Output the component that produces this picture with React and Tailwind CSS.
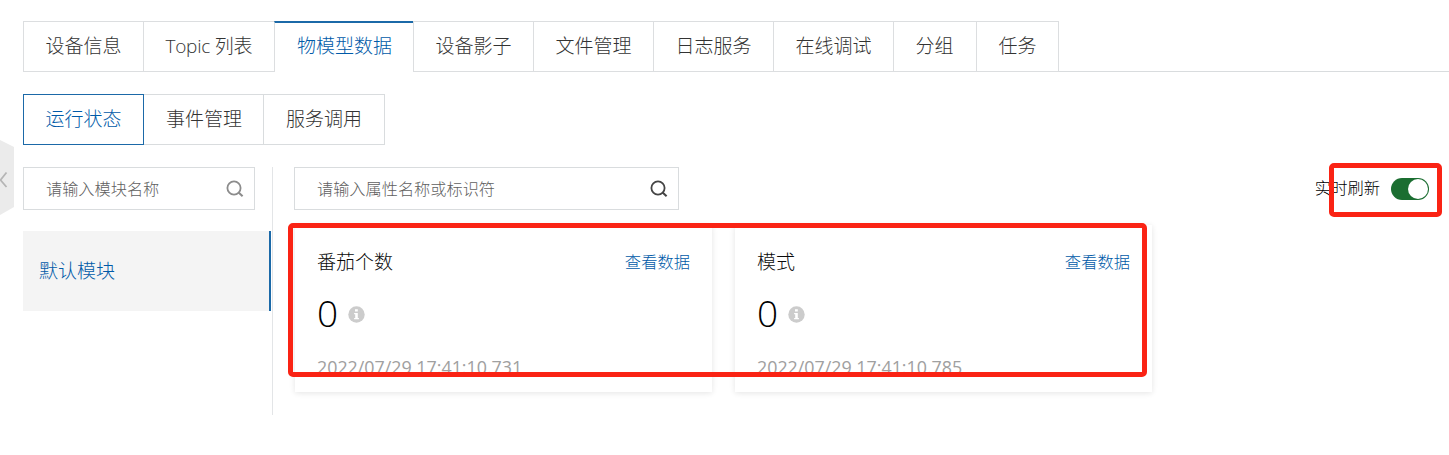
import React from "react";

const tabs = [
  { label: "设备信息", width: "w-[120px]" },
  { label: "Topic 列表", width: "w-[131px] tracking-[-0.25px]" },
  { label: "物模型数据", width: "w-[139px]", active: true },
  { label: "设备影子", width: "w-[120px]" },
  { label: "文件管理", width: "w-[120px]" },
  { label: "日志服务", width: "w-[120px]" },
  { label: "在线调试", width: "w-[120px]" },
  { label: "分组", width: "w-[83px]" },
  { label: "任务", width: "w-[83px] border-r" },
];

const cards = [
  { title: "番茄个数", value: "0", time: "2022/07/29 17:41:10.731" },
  { title: "模式", value: "0", time: "2022/07/29 17:41:10.785" },
];

function SearchIcon({ className }) {
  return (
    <svg className={className} width="18" height="18" viewBox="0 0 18 18" fill="none" stroke="currentColor" strokeWidth="1.8">
      <circle cx="8" cy="8" r="6.6" />
      <path d="M12.6 12.6 L16.6 16.3" strokeWidth="2.1" />
    </svg>
  );
}

function InfoIcon() {
  return (
    <svg className="mt-px" width="17" height="17" viewBox="0 0 17 17">
      <circle cx="8.5" cy="8.5" r="8.2" fill="#cccccc" />
      <path d="M7 3.3h2.8v2.3H7zM6.1 7h3.7v5h1.1v1.3H6.1V12h1.1V8.3H6.1z" fill="#fff" />
    </svg>
  );
}

function Tab({ label, width, active }) {
  return (
    <div
      className={`${width} h-[51px] shrink-0 border-l border-[#dcdee0] text-[19px] ${
        active
          ? "border-t-2 border-t-[#1b69a8] bg-white pl-[22px] leading-[47px] text-[#005aa8]"
          : "border-t border-b pl-[21.5px] leading-[49px] text-[#333]"
      }`}
    >
      {label}
    </div>
  );
}

function SearchBox({ placeholder, width, iconColor }) {
  return (
    <div className={`${width} flex h-[43px] items-center justify-between border border-[#d9dcde] pl-[22px] pr-[10px]`}>
      <span className="pt-px text-[16.2px] leading-[41px] text-[#606060]">{placeholder}</span>
      <SearchIcon className={iconColor} />
    </div>
  );
}

function Card({ title, value, time }) {
  return (
    <div className="h-[167px] w-[417px] bg-white px-[22px] pt-[22px] shadow-[0_1px_6px_rgba(0,0,0,0.11)]">
      <div className="flex h-[30px] items-center justify-between">
        <span className="pt-px text-[19px] text-[#0a0a0a]">{title}</span>
        <span className="text-[16.3px] text-[#005aa8]">查看数据</span>
      </div>
      <div className="mt-[10px] flex h-[54px] items-center">
        <span className="w-[31px] pb-[3px] text-[37px] leading-[51px] text-black">{value}</span>
        <InfoIcon />
      </div>
      <div className="mt-[13px] text-[17.85px] font-normal leading-[26px] text-[#a0a0a0]">{time}</div>
    </div>
  );
}

export default function App() {
  return (
    <div className="relative h-[455px] w-[1449px] overflow-hidden whitespace-nowrap bg-white pl-[23px] pt-[21px] font-['Open_Sans','Noto_Sans_CJK_SC',sans-serif] font-light">
      <nav className="flex">
        {tabs.map((t) => (
          <Tab key={t.label} {...t} />
        ))}
        <div className="grow border-b border-[#d9dcde]" />
      </nav>

      <div className="mt-[22px] flex h-[51px] text-[19px] leading-[49px] text-[#333]">
        <div className="w-[121px] border border-[#1b69a8] pl-[21.5px] text-[#005aa8]">运行状态</div>
        <div className="w-[119px] border-y border-[#d9dcde] pl-[22px]">事件管理</div>
        <div className="w-[122px] border border-[#d9dcde] pl-[22px]">服务调用</div>
      </div>

      <div className="mt-[22px] flex">
        <aside className="h-[248px] w-[250px] border-r border-[#e3e5e7]">
          <SearchBox placeholder="请输入模块名称" width="w-[232px]" iconColor="text-[#8c8c8c]" />
          <div className="mt-[21px] h-[80px] w-[248px] border-r-2 border-[#1b69a8] bg-[#f4f4f4] pl-4 text-[19px] leading-[81px] text-[#005aa8]">
            默认模块
          </div>
        </aside>
        <main className="ml-[21px] grow">
          <div className="flex items-center justify-between pr-5">
            <SearchBox placeholder="请输入属性名称或标识符" width="w-[385px]" iconColor="text-[#444]" />
            <div className="flex items-center gap-[11px] text-[16.3px] text-black">
              <span>实时刷新</span>
              <div className="flex h-[22px] w-[38px] items-center justify-end rounded-full bg-[#1b6e31] pr-px">
                <div className="h-5 w-5 rounded-full bg-white" />
              </div>
            </div>
          </div>
          <div className="ml-px mt-[15px] flex gap-[23px]">
            {cards.map((c) => (
              <Card key={c.title} {...c} />
            ))}
          </div>
        </main>
      </div>

      <svg className="absolute left-0 top-[139px]" width="14" height="77" viewBox="0 0 14 77">
        <path d="M0 1 L14 8 V68 L0 76 Z" fill="#ebebeb" />
        <path d="M6.5 33.5 L0.5 41 L6.5 48" fill="none" stroke="#b5b5b5" strokeWidth="1.8" />
      </svg>
      <div className="absolute left-[288px] top-[223px] h-[154px] w-[859px] rounded-[5px] border-5 border-[#fa2314]" />
      <div className="absolute left-[1329px] top-[163px] h-[54px] w-[113px] rounded-[5px] border-5 border-[#fa2314]" />
    </div>
  );
}
